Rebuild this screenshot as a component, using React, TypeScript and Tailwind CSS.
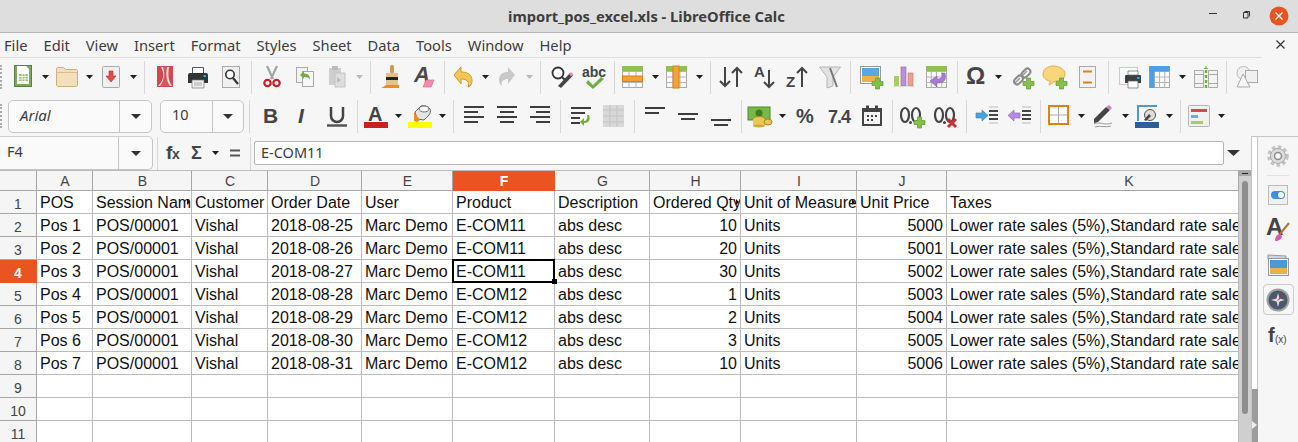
import type { ReactNode } from "react";

const ui = "font-['Noto_Sans','Open_Sans',sans-serif]";
const sans = "Liberation Sans, Arial, sans-serif";

function Ico({ c, w, children }: { c: string; w: number; children: ReactNode }) {
  return (
    <svg className={`shrink-0 h-[24px] overflow-visible ${c}`} width={w} height={24} viewBox={`0 0 ${w} 24`} fill="none">
      {children}
    </svg>
  );
}

function Dd({ c, off }: { c: string; off?: boolean }) {
  return (
    <svg className={`shrink-0 ${c}`} width={7} height={4} viewBox="0 0 7 4">
      <path d="M0 0h7L3.5 4z" fill={off ? "#b9b9b9" : "#1f1f1f"} />
    </svg>
  );
}

function Sep({ c }: { c: string }) {
  return <div className={`shrink-0 w-px h-[33px] bg-[#d8d8d8] ${c}`} />;
}

function Plus({ x, y }: { x: number; y: number }) {
  return (
    <path
      transform={`translate(${x} ${y})`}
      d="M3.5 0h4v3.5H11v4H7.5V11h-4V7.5H0v-4h3.5z"
      fill="#86bf4b"
      stroke="#5f9a32"
      strokeWidth=".7"
    />
  );
}

function Tbl({ x, y, w, h, cols, rows }: { x: number; y: number; w: number; h: number; cols: number; rows: number }) {
  const lines = [];
  for (let i = 1; i < cols; i++) lines.push(`M${x + (w * i) / cols} ${y}v${h}`);
  for (let i = 1; i < rows; i++) lines.push(`M${x} ${y + (h * i) / rows}h${w}`);
  return (
    <g>
      <rect x={x + 0.5} y={y + 0.5} width={w - 1} height={h - 1} fill="#fafafa" stroke="#a9a9a9" />
      <path d={lines.join("")} stroke="#b5b5b5" />
    </g>
  );
}

function Letter({ x, y, s, size, fill = "#444", italic, weight = 700, spacing }: { x: number; y: number; s: string; size: number; fill?: string; italic?: boolean; weight?: number; spacing?: number }) {
  return (
    <text x={x} y={y} fontFamily={sans} fontSize={size} fontWeight={weight} fontStyle={italic ? "italic" : "normal"} fill={fill} letterSpacing={spacing}>
      {s}
    </text>
  );
}

function ToolbarOne() {
  return (
    <div className="flex items-center h-[38px]">
      <div className="w-[2px] h-[24px] border-l-2 border-dotted border-[#aaa] shrink-0" />
      <Ico c="ml-[12px]" w={18}>
        <rect x=".5" y=".5" width="17" height="21" fill="#7ca860" stroke="#567f41" />
        <path d="M3 1h9l3 3v15H3z" fill="#fff" />
        <path d="M5 9h9v7H5z" fill="#9cc27f" />
        <path d="M5 11.5h9M5 14h9M8 9v7M11 9v7" stroke="#fff" strokeWidth=".8" />
      </Ico>
      <Dd c="ml-[10px]" />
      <Ico c="ml-[7px]" w={22}>
        <path d="M.5 5.500V3.500l1-1h6l2 2h11l1 1v15l-1 1h-19l-1-1z" fill="#f2dfbb" stroke="#cfae7c" />
        <path d="M1 7.500h20" stroke="#d9bd8d" />
      </Ico>
      <Dd c="ml-[8px]" />
      <Ico c="ml-[9px]" w={18}>
        <rect x=".5" y="1.500" width="17" height="21" rx="1" fill="#efefef" stroke="#a9a9a9" />
        <path d="M7 6h4v5h3l-5 6-5-6h3z" fill="#e24b4b" stroke="#b52c2c" strokeWidth=".6" />
      </Ico>
      <Dd c="ml-[10px]" />
      <Sep c="ml-[7px]" />
      <Ico c="ml-[12px]" w={16}>
        <rect y="1" width="16" height="21" fill="#cf4a50" />
        <path d="M1 21C8 14 7 8 4 2h8c-1 7-1 13 3 19z" fill="#f3d7d5" />
        <path d="M3 21C8 14 8 8 6 2h4c-1 7-1 13 3 19z" fill="#cf5b60" />
      </Ico>
      <Ico c="ml-[15px]" w={20}>
        <path d="M4.500 2.500h11v6h-11z" fill="#fff" stroke="#555" />
        <path d="M0 10a2 2 0 0 1 2-2h16a2 2 0 0 1 2 2v8H0z" fill="#2f3437" />
        <rect x="15.500" y="10" width="2.500" height="2" fill="#29a8df" />
        <path d="M4 15h12v8H4z" fill="#efefef" stroke="#777" strokeWidth=".7" />
        <path d="M6 18h8M6 20h8" stroke="#aaa" />
      </Ico>
      <Ico c="ml-[14px]" w={18}>
        <rect x=".5" y="1.500" width="17" height="21" fill="#f0f0f0" stroke="#a9a9a9" />
        <circle cx="8" cy="9.500" r="4.200" fill="#fff" stroke="#333" strokeWidth="1.600" />
        <path d="M11 13l5 6" stroke="#333" strokeWidth="2.200" />
      </Ico>
      <Sep c="ml-[11px]" />
      <Ico c="ml-[11px]" w={18}>
        <path d="M4 1l6 13M14 1L8 14" stroke="#a4a4a4" strokeWidth="2.200" />
        <circle cx="4.500" cy="18" r="3.200" stroke="#c3222a" strokeWidth="2.200" />
        <circle cx="13.500" cy="18" r="3.200" stroke="#c3222a" strokeWidth="2.200" />
      </Ico>
      <Ico c="ml-[15px]" w={18}>
        <rect x=".5" y="2.500" width="11" height="15" fill="#f2f2f2" stroke="#a9a9a9" />
        <rect x="6.500" y="6.500" width="11" height="15" fill="#f8f8f8" stroke="#a9a9a9" />
        <path d="M4 10l4-4v2.500c4 0 6 2 6 6-1.500-2-3-2.500-6-2.500V14z" fill="#6fb041" />
      </Ico>
      <Ico c="ml-[14px]" w={18}>
        <rect x="1" y="3" width="12" height="17" fill="#cfcfcf" />
        <rect x="4" y="1" width="6" height="4" fill="#bbb" />
        <rect x="7" y="8" width="10" height="14" fill="#dedede" stroke="#c4c4c4" />
        <path d="M9 12l4 3-4 3z" fill="#bdbdbd" />
      </Ico>
      <Dd c="ml-[10px]" off />
      <Sep c="ml-[7px]" />
      <Ico c="ml-[10px]" w={20}>
        <rect x="9" y="0" width="4" height="8" rx="1.500" fill="#d19a52" />
        <path d="M5 8h12v4H5z" fill="#e3c07f" />
        <path d="M5 12h12v3H5z" fill="#222" />
        <path d="M5 15h12v5H5z" fill="#e6c489" />
        <path d="M0 23c3-1 4-3 6-3h12v3z" fill="#ee8a1f" />
      </Ico>
      <Ico c="ml-[13px]" w={20}>
        <Letter x={0} y={17} s="A" size={22} italic fill="#4a4a4a" />
        <path d="M9 22l3-7h8l-3 7z" fill="#f18cb0" stroke="#d0688e" strokeWidth=".6" />
      </Ico>
      <Sep c="ml-[10px]" />
      <Ico c="ml-[8px]" w={20}>
        <path d="M8 2v5c6 0 11 2 11 9 0 3-2 6-4 6 1-2 2-8-7-8v5L1 10z" fill="#f3c658" stroke="#c99c2f" />
      </Ico>
      <Dd c="ml-[9px]" />
      <Ico c="ml-[9px]" w={18}>
        <path d="M10 2v5C5 7 1 9 1 15c0 3 1 5 3 6-1-3 0-7 6-7v5l7-9z" fill="#c9c9c9" />
      </Ico>
      <Dd c="ml-[10px]" off />
      <Sep c="ml-[7px]" />
      <Ico c="ml-[10px]" w={22}>
        <circle cx="7" cy="8" r="5.500" stroke="#333" strokeWidth="1.800" fill="#fff" />
        <path d="M11 12l3 3" stroke="#333" strokeWidth="2" />
        <path d="M7 21L19 8l3 2.500L10 23z" fill="#444" />
        <path d="M18 9l2-2 2.500 2.500L20 11.500z" fill="#e58ac0" />
      </Ico>
      <Ico c="ml-[9px]" w={24}>
        <Letter x={0} y={12} s="abc" size={14} />
        <path d="M6 15l5 5 8-8 3 2-11 10-7-6z" fill="#6fb041" />
      </Ico>
      <Sep c="ml-[8px]" />
      <Ico c="ml-[7px]" w={21}>
        <Tbl x={0} y={1} w={21} h={22} cols={3} rows={4} />
        <rect x=".5" y="1" width="20" height="5" fill="#8dc24f" />
        <rect x=".5" y="11" width="20" height="5.500" fill="#f0a33c" stroke="#e07f10" />
      </Ico>
      <Dd c="ml-[9px]" />
      <Ico c="ml-[7px]" w={21}>
        <Tbl x={0} y={1} w={21} h={22} cols={3} rows={4} />
        <rect x=".5" y="1" width="20" height="5" fill="#8dc24f" />
        <rect x="7" y="1" width="6" height="22" fill="#f0a33c" stroke="#e07f10" />
      </Ico>
      <Dd c="ml-[9px]" />
      <Sep c="ml-[7px]" />
      <Ico c="ml-[8px]" w={24}>
        <path d="M6 2v19M1 16l5 5 5-5M18 22V3M13 8l5-5 5 5" stroke="#444" strokeWidth="2" />
      </Ico>
      <Ico c="ml-[11px]" w={22}>
        <Letter x={0} y={12} s="A" size={15} />
        <path d="M15 5v17M10 17l5 5 5-5" stroke="#444" strokeWidth="2" />
      </Ico>
      <Ico c="ml-[10px]" w={25}>
        <Letter x={0} y={22} s="Z" size={15} />
        <path d="M16 22V3M11 8l5-5 5 5" stroke="#444" strokeWidth="2" />
      </Ico>
      <Ico c="ml-[8px]" w={22}>
        <path d="M.5 2h21L14 12v9l-6 2V12z" fill="#e2e2e2" stroke="#b5b5b5" />
        <path d="M11 3l7 19" stroke="#777" strokeWidth="2" />
      </Ico>
      <Sep c="ml-[9px]" />
      <Ico c="ml-[9px]" w={23}>
        <rect x=".5" y="1.500" width="20" height="17" fill="#fff" stroke="#999" />
        <rect x="2" y="3" width="17" height="8" fill="#5aa6e0" />
        <rect x="2" y="11" width="17" height="6" fill="#f0b04a" />
        <Plus x={12} y={13} />
      </Ico>
      <Ico c="ml-[10px]" w={22}>
        <rect x="1" y="11" width="5" height="10" fill="#a6cf62" />
        <rect x="8" y="2" width="5" height="19" fill="#b98fd6" stroke="#8f67ad" strokeWidth=".6" />
        <rect x="15" y="8" width="5" height="13" fill="#eda08f" stroke="#c57764" strokeWidth=".6" />
        <path d="M0 21.500h22" stroke="#ddd" />
      </Ico>
      <Ico c="ml-[11px]" w={21}>
        <Tbl x={0} y={1} w={21} h={22} cols={4} rows={4} />
        <rect x=".5" y="1" width="20" height="5" fill="#8dc24f" />
        <path d="M19 8c2 8-2 10-8 10v4l-7-6 7-5v3c4 0 6-2 5-6z" fill="#a77bd1" stroke="#7e57a5" strokeWidth=".5" />
      </Ico>
      <Sep c="ml-[10px]" />
      <Ico c="ml-[8px]" w={20}>
        <Letter x={0} y={19} s="Ω" size={24} />
      </Ico>
      <Dd c="ml-[9px]" />
      <Ico c="ml-[10px]" w={22}>
        <path d="M3 18l5-5M10 11l5-5" stroke="#999" strokeWidth="1.500" />
        <rect x="1.500" y="12" width="10" height="6" rx="3" transform="rotate(-45 6.500 15)" stroke="#8a8a8a" strokeWidth="2" />
        <rect x="9" y="5" width="10" height="6" rx="3" transform="rotate(-45 14 8)" stroke="#8a8a8a" strokeWidth="2" />
        <Plus x={11} y={13} />
      </Ico>
      <Ico c="ml-[9px]" w={24}>
        <path d="M10 1c6 0 12 3 12 8s-5 7-10 7c-2 2-4 3-6 4 1-2 1-3 1-4C2 15 0 12 0 9c0-5 5-8 10-8z" fill="#f9d67a" stroke="#e0b048" />
        <Plus x={13} y={13} />
      </Ico>
      <Ico c="ml-[12px]" w={17}>
        <rect x=".5" y="1.500" width="16" height="21" fill="#f2f2f2" stroke="#a9a9a9" />
        <path d="M4 6.500h9M4 17.500h9" stroke="#e07f10" strokeWidth="2" />
      </Ico>
      <Sep c="ml-[12px]" />
      <Ico c="ml-[10px]" w={22}>
        <rect x=".5" y="2.500" width="18" height="17" fill="#fafafa" stroke="#c98a8a" strokeDasharray="1 1" />
        <path d="M6 11a1 1 0 0 1 1-1h14a1 1 0 0 1 1 1v7H6z" fill="#3a3f42" />
        <path d="M9 6h10v4H9zM9 16h10v7H9z" fill="#fff" stroke="#666" strokeWidth=".7" />
        <rect x="18" y="12" width="2.500" height="2" fill="#29a8df" />
      </Ico>
      <Ico c="ml-[8px]" w={21}>
        <Tbl x={0} y={1} w={21} h={22} cols={4} rows={4} />
        <rect x=".5" y="1" width="20" height="5.500" fill="#4f9fe0" />
        <rect x=".5" y="1" width="5" height="22" fill="#4f9fe0" />
      </Ico>
      <Dd c="ml-[9px]" />
      <Ico c="ml-[8px]" w={24}>
        <path d="M.5 5.500h9v17h-9zM14.500 5.500h9v17h-9z" fill="#f3f3f3" stroke="#aaa" />
        <path d="M.5 9.500h9M14.500 9.500h9M.5 18.500h9M14.500 18.500h9" stroke="#aaa" />
        <path d="M12 5v19" stroke="#6fb041" strokeWidth="2.500" strokeDasharray="3 2" />
        <path d="M10 3h1.500V1h1v2H14v1h-4z" fill="#6fb041" />
      </Ico>
      <Sep c="ml-[8px]" />
      <Ico c="ml-[9px]" w={22}>
        <circle cx="7.500" cy="8" r="6.500" fill="#f0f0f0" stroke="#bbb" />
        <rect x="9.500" y="5.500" width="12" height="12" fill="#f0f0f0" stroke="#aaa" />
        <path d="M7 9l7 13H1z" fill="#f6f6f6" stroke="#aaa" />
      </Ico>
    </div>
  );
}

function Combo({ text, italic, c, split }: { text: string; italic?: boolean; c: string; split: string }) {
  return (
    <div className={`shrink-0 flex h-[33px] bg-[#fafafa] border border-[#c5c5c5] rounded-[5px] ${c}`}>
      <div className={`flex items-center pl-[11px] pb-[2px] border-r border-[#c5c5c5] text-[#3d3d3d] ${italic ? "italic text-[15px]" : "text-[14.5px]"} ${split}`}>{text}</div>
      <div className="flex-1 flex items-center justify-center">
        <svg width={10} height={5} viewBox="0 0 10 5">
          <path d="M0 0h10L5 5z" fill="#333" />
        </svg>
      </div>
    </div>
  );
}

function ToolbarTwo() {
  return (
    <div className="flex items-center h-[40px]">
      <div className="w-[2px] h-[24px] border-l-2 border-dotted border-[#aaa] shrink-0" />
      <Combo text="Arial" italic c="ml-[6px] w-[144px]" split="w-[111px]" />
      <Combo text="10" c="ml-[8px] w-[84px]" split="w-[52px]" />
      <Sep c="ml-[5px]" />
      <Ico c="ml-[14px]" w={13}>
        <Letter x={-1} y={19} s="B" size={21} />
      </Ico>
      <Ico c="ml-[21px]" w={11}>
        <Letter x={0} y={19} s="I" size={21} italic />
      </Ico>
      <Ico c="ml-[18px]" w={20}>
        <path d="M4 3v9a6 6 0 0 0 12 0V3" stroke="#444" strokeWidth="2.500" />
        <path d="M0 21.500h20" stroke="#555" strokeWidth="2.500" />
      </Ico>
      <Sep c="ml-[10px]" />
      <Ico c="ml-[6px]" w={24}>
        <Letter x={4} y={17} s="A" size={20} />
        <rect y="18" width="24" height="6" fill="#c9211e" />
      </Ico>
      <Dd c="ml-[7px]" />
      <Ico c="ml-[6px]" w={24}>
        <path d="M7 8l6-6c3-1 7 0 9 3 1 2 0 5-1 6l-5 5-7-1z" fill="#e4e4e4" stroke="#666" />
        <ellipse cx="16" cy="5" rx="5" ry="3" fill="#f6f6f6" stroke="#777" />
        <path d="M6 8l6 8-3 2-3-1z" fill="#ee8a1f" />
        <rect y="18" width="24" height="6" fill="#ffff00" />
      </Ico>
      <Dd c="ml-[7px]" />
      <Sep c="ml-[7px]" />
      <Ico c="ml-[10px]" w={20}>
        <path d="M0 3h20M0 8h14M0 13h20M0 18h14" stroke="#3d3d3d" strokeWidth="2" />
      </Ico>
      <Ico c="ml-[13px]" w={20}>
        <path d="M0 3h20M3 8h14M0 13h20M3 18h14" stroke="#3d3d3d" strokeWidth="2" />
      </Ico>
      <Ico c="ml-[13px]" w={20}>
        <path d="M0 3h20M6 8h14M0 13h20M6 18h14" stroke="#3d3d3d" strokeWidth="2" />
      </Ico>
      <Sep c="ml-[10px]" />
      <Ico c="ml-[10px]" w={20}>
        <path d="M0 4h20M0 9h14M0 14h9M0 19h9" stroke="#3d3d3d" strokeWidth="2" />
        <path d="M18 11c2 6-1 8-5 8v3l-4-4 4-4v3c2 0 4-2 3-6z" fill="#6fb041" />
      </Ico>
      <Ico c="ml-[12px]" w={21}>
        <rect width="21" height="22" y="1" fill="#d8d8d8" />
        <path d="M0 6h21M0 12h21M0 18h21M7 1v22M14 1v22" stroke="#c3c3c3" />
      </Ico>
      <Sep c="ml-[10px]" />
      <Ico c="ml-[10px]" w={20}>
        <path d="M0 4h20M0 9h14" stroke="#3d3d3d" strokeWidth="2" />
      </Ico>
      <Ico c="ml-[13px]" w={20}>
        <path d="M0 10h20M3 15h14" stroke="#3d3d3d" strokeWidth="2" />
      </Ico>
      <Ico c="ml-[13px]" w={20}>
        <path d="M0 16h20M3 21h14" stroke="#3d3d3d" strokeWidth="2" />
      </Ico>
      <Sep c="ml-[10px]" />
      <Ico c="ml-[6px]" w={24}>
        <rect x="0" y="3" width="22" height="13" fill="#77b84a" stroke="#4f8a2c" />
        <circle cx="11" cy="9" r="3.500" fill="#3f7c20" />
        <ellipse cx="11" cy="15" rx="6" ry="2.500" fill="#e8c65a" stroke="#a98520" />
        <rect x="5" y="15" width="12" height="7" fill="#e8c65a" />
        <ellipse cx="11" cy="22" rx="6" ry="1.500" fill="#cda93e" />
        <ellipse cx="20" cy="18" rx="4" ry="3" fill="#e8c65a" stroke="#a98520" />
      </Ico>
      <Dd c="ml-[7px]" />
      <Ico c="ml-[11px]" w={18}>
        <Letter x={-1} y={19} s="%" size={20} />
      </Ico>
      <Ico c="ml-[13px]" w={22}>
        <Letter x={0} y={19} s="7.4" size={18} spacing={-1} />
      </Ico>
      <Ico c="ml-[12px]" w={20}>
        <path d="M0 4h20v18H0z" fill="#444" />
        <rect x="4" y="1.500" width="3" height="4" fill="#444" />
        <rect x="13" y="1.500" width="3" height="4" fill="#444" />
        <rect x="2" y="8" width="16" height="12" fill="#f6f6f6" />
        <path d="M5 12h2M9 12h2M13 12h2M5 16h2M9 16h2" stroke="#444" strokeWidth="2" />
      </Ico>
      <Sep c="ml-[10px]" />
      <Ico c="ml-[7px]" w={25}>
        <ellipse cx="5" cy="11" rx="4" ry="7" stroke="#444" strokeWidth="2.200" />
        <ellipse cx="16" cy="11" rx="4" ry="7" stroke="#444" strokeWidth="2.200" />
        <circle cx="10.500" cy="18.500" r="1.500" fill="#444" />
        <Plus x={14} y={13} />
      </Ico>
      <Ico c="ml-[9px]" w={24}>
        <ellipse cx="5" cy="11" rx="4" ry="7" stroke="#444" strokeWidth="2.200" />
        <ellipse cx="16" cy="11" rx="4" ry="7" stroke="#444" strokeWidth="2.200" />
        <circle cx="10.500" cy="18.500" r="1.500" fill="#444" />
        <path d="M14 15l8 8M22 15l-8 8" stroke="#c9303a" strokeWidth="3" />
      </Ico>
      <Sep c="ml-[8px]" />
      <Ico c="ml-[9px]" w={23}>
        <path d="M0 9h6V6l6 5.500L6 17v-3H0z" fill="#4aa3df" stroke="#2b80b8" strokeWidth=".6" />
        <path d="M13 7h9M13 11h9M13 15h9" stroke="#444" strokeWidth="1.800" />
        <path d="M13 3h9M13 19h9" stroke="#bbb" />
      </Ico>
      <Ico c="ml-[9px]" w={23}>
        <path d="M12 9H6V6L0 11.500 6 17v-3h6z" fill="#b68ae0" stroke="#8d61b8" strokeWidth=".6" />
        <path d="M14 7h9M14 11h9M14 15h9" stroke="#444" strokeWidth="1.800" />
        <path d="M14 3h9M14 19h9" stroke="#bbb" />
      </Ico>
      <Sep c="ml-[9px]" />
      <Ico c="ml-[7px]" w={21}>
        <rect x="1" y="2" width="19" height="18" fill="#fff" stroke="#e67e10" strokeWidth="2" />
        <path d="M10.500 3v16M2 11h17" stroke="#aaa" />
      </Ico>
      <Dd c="ml-[9px]" />
      <Ico c="ml-[8px]" w={20}>
        <path d="M1 15L13 3l4 3L5 18l-4 1z" fill="#444" />
        <path d="M13 3l3-2 3 3-2 2z" fill="#d87cc4" />
        <path d="M1 20c6-3 10 2 18-1M2 23c6-2 10 1 16-1" stroke="#999" />
      </Ico>
      <Dd c="ml-[9px]" />
      <Ico c="ml-[6px]" w={24}>
        <path d="M2 1h20v2H4v14H2z" fill="#4a9ad8" />
        <circle cx="15" cy="11" r="5.500" fill="#ddd" stroke="#555" />
        <path d="M9 16l5-6 2 2-5 5z" fill="#444" />
        <rect y="18" width="24" height="6" fill="#2a6099" />
      </Ico>
      <Dd c="ml-[7px]" />
      <Sep c="ml-[7px]" />
      <Ico c="ml-[7px]" w={22}>
        <rect x=".5" y="1.500" width="21" height="21" rx="1" fill="#f0f0f0" stroke="#b5b5b5" />
        <rect x="3" y="5" width="16" height="3" fill="#d0494c" />
        <rect x="3" y="11" width="7" height="3" fill="#65ade5" />
        <rect x="3" y="17" width="12" height="3" fill="#a6cf62" />
      </Ico>
      <Dd c="ml-[8px]" />
    </div>
  );
}

function FormulaBar() {
  return (
    <div className="flex items-center h-[34px] bg-[#f6f6f6]">
      <div className="shrink-0 flex self-start w-[153px] h-[34px] border border-t-[#cfcfcf] border-[#c5c5c5] border-l-0 rounded-br-[5px] rounded-tr-[5px] bg-[#fafafa]">
        <div className="flex items-center pl-[7px] pb-[2px] w-[119px] border-r border-[#c5c5c5] text-[14.5px] text-[#3d3d3d]">F4</div>
        <div className="flex-1 flex items-center justify-center">
          <svg width={10} height={5} viewBox="0 0 10 5">
            <path d="M0 0h10L5 5z" fill="#333" />
          </svg>
        </div>
      </div>
      <Sep c="ml-[4px] h-[24px]" />
      <Ico c="ml-[8px]" w={17}>
        <Letter x={0} y={18} s="f" size={19} />
        <Letter x={6} y={18} s="x" size={14} />
      </Ico>
      <Ico c="ml-[8px]" w={13}>
        <Letter x={0} y={18} s="Σ" size={18} />
      </Ico>
      <Dd c="ml-[8px]" />
      <Ico c="ml-[11px]" w={10}>
        <path d="M0 9.500h10M0 14.500h10" stroke="#555" strokeWidth="2" />
      </Ico>
      <Sep c="ml-[10px] h-[24px]" />
      <div className="ml-[3px] flex items-center pl-[6px] pb-px w-[970px] h-[24px] bg-white border border-[#b5b5b5] rounded-[2px] text-[14.5px] text-[#3d3d3d]">E-COM11</div>
      <svg className="ml-[3px]" width={13} height={6} viewBox="0 0 13 6">
        <path d="M0 0h13L6.500 6z" fill="#333" />
      </svg>
    </div>
  );
}

const columns = ["A", "B", "C", "D", "E", "F", "G", "H", "I", "J", "K"];
const heads = ["POS", "Session Name", "Customer", "Order Date", "User", "Product", "Description", "Ordered Qty", "Unit of Measure", "Unit Price", "Taxes"];
const taxes = "Lower rate sales (5%),Standard rate sales (15%)";
const rows = [
  ["Pos 1", "2018-08-25", "E-COM11", "10", "5000"],
  ["Pos 2", "2018-08-26", "E-COM11", "20", "5001"],
  ["Pos 3", "2018-08-27", "E-COM11", "30", "5002"],
  ["Pos 4", "2018-08-28", "E-COM12", "1", "5003"],
  ["Pos 5", "2018-08-29", "E-COM12", "2", "5004"],
  ["Pos 6", "2018-08-30", "E-COM12", "3", "5005"],
  ["Pos 7", "2018-08-31", "E-COM12", "10", "5006"],
];

const cellCls = "relative h-[23px] border-r border-b border-[#bcbcbc] px-[3px] overflow-hidden whitespace-nowrap text-[16px] leading-[24px] text-[#111] bg-white";
const headCls = "flex items-center justify-center border-r border-b border-[#a6a6a6] text-[14px] leading-none text-[#444] bg-[#f5f5f5]";
const activeHead = "flex items-center justify-center border-r border-b border-[#e95420] bg-[#e95420] text-white font-bold text-[14px] leading-none";

function Clip() {
  return (
    <svg className="absolute right-px top-[8px]" width={3} height={6} viewBox="0 0 3 6">
      <path d="M0 0l3 3-3 3z" fill="#300" />
    </svg>
  );
}

function Cell({ text, right, clip, active }: { text?: string; right?: boolean; clip?: boolean; active?: boolean }) {
  return (
    <div className={`${cellCls} ${right ? "text-right" : ""} ${active ? "overflow-visible" : ""}`}>
      {text}
      {clip && <Clip />}
      {active && (
        <>
          <div className="absolute left-[-1px] top-[-1px] w-[103px] h-[24px] border-2 border-black" />
          <div className="absolute right-[-3px] bottom-[-2px] z-10 w-[5px] h-[5px] bg-black" />
        </>
      )}
    </div>
  );
}

function Sheet() {
  return (
    <div className="w-[1239px] border-t border-[#bcbcbc] font-['Liberation_Sans',Arial,sans-serif]">
      <div className="grid grid-cols-[37px_56px_99px_76px_94px_91px_102px_95px_91px_116px_90px_292px]">
        <div className="h-[20px] bg-[#f5f5f5] border-r border-b border-[#a6a6a6]" />
        {columns.map((c) => (
          <div key={c} className={`${c === "F" ? activeHead : headCls} ${c === "K" ? "pl-[73px]" : "pl-px"}`}>
            {c}
          </div>
        ))}
        <div className={`${headCls} pt-[3px]`}>1</div>
        {heads.map((h) => (
          <Cell key={h} text={h} clip={h === "Session Name" || h === "Ordered Qty" || h === "Unit of Measure"} />
        ))}
        {rows.map((r, i) => (
          <div key={r[0]} className="contents">
            <div className={`${i === 2 ? activeHead : headCls} pt-[3px]`}>{i + 2}</div>
            <Cell text={r[0]} />
            <Cell text="POS/00001" />
            <Cell text="Vishal" />
            <Cell text={r[1]} />
            <Cell text="Marc Demo" />
            <Cell text={r[2]} active={i === 2} />
            <Cell text="abs desc" />
            <Cell text={r[3]} right />
            <Cell text="Units" />
            <Cell text={r[4]} right />
            <Cell text={taxes} />
          </div>
        ))}
        {[9, 10, 11].map((n) => (
          <div key={n} className="contents">
            <div className={`${headCls} pt-[3px]`}>{n}</div>
            {columns.map((c) => (
              <Cell key={c} />
            ))}
          </div>
        ))}
      </div>
    </div>
  );
}

function Scrollbar() {
  return (
    <div className="shrink-0 w-[12px] flex flex-col bg-[#cfcfcf]">
      <div className="h-[6px] bg-[#a8a8a8] flex items-center justify-center">
        <div className="w-[6px] h-[1px] bg-[#222]" />
      </div>
      <div className="mt-[5px] ml-[3px] w-[6px] h-[233px] bg-[#8e8e8e] rounded-[3px]" />
    </div>
  );
}

function Sidebar() {
  return (
    <div className="shrink-0 w-[47px] flex border-t border-[#c5c5c5] bg-[#f6f6f6]">
      <div className="shrink-0 w-[7px] flex flex-col border-l border-[#c5c5c5]">
        <div className="h-[252px] bg-white border-r border-[#c5c5c5]" />
        <div className="relative flex-1 bg-[#9c9c9c]">
          <svg className="absolute top-[32px] left-0" width={5} height={8} viewBox="0 0 5 8">
            <path d="M0 0l5 4-5 4z" fill="#eee" />
          </svg>
        </div>
      </div>
      <div className="flex-1 flex flex-col items-center">
        <svg className="mt-[8px]" width={22} height={22} viewBox="0 0 22 22" fill="none">
          <circle cx="11" cy="11" r="9" stroke="#c4c4c4" strokeWidth="3.500" strokeDasharray="3.500 2.500" />
          <circle cx="11" cy="11" r="7.500" fill="#dcdcdc" stroke="#aaa" />
          <circle cx="11" cy="11" r="3.500" fill="#f6f6f6" stroke="#8e8e8e" strokeWidth="1.500" />
        </svg>
        <div className="mt-[8px] w-[22px] h-px bg-[#e2e2e2]" />
        <svg className="mt-[9px]" width={20} height={20} viewBox="0 0 20 20" fill="none">
          <rect x=".5" y=".5" width="19" height="19" fill="#f0f0f0" stroke="#bbb" />
          <rect x="3" y="6" width="14" height="8" rx="4" fill="#3d8fe0" />
          <circle cx="13" cy="10" r="3" fill="#fff" />
        </svg>
        <svg className="mt-[11px] overflow-visible" width={24} height={26} viewBox="0 0 24 26" fill="none">
          <text x="0" y="19" fontFamily={sans} fontSize="24" fontWeight="700" fill="#444">A</text>
          <path d="M23 7L14 18" stroke="#b8742c" strokeWidth="2" />
          <path d="M9 25c0-4 2-7 5-7l2 2c0 3-3 5-7 5z" fill="#d85fb0" />
        </svg>
        <svg className="mt-[12px]" width={23} height={22} viewBox="0 0 23 22" fill="none">
          <path d="M1 1l18 1v3H1z" fill="#c9d8e6" stroke="#999" />
          <rect x="1.500" y="4.500" width="20" height="17" fill="#fff" stroke="#999" />
          <rect x="3" y="6" width="17" height="8" fill="#4a9ad8" />
          <rect x="3" y="14" width="17" height="6" fill="#efb04c" />
        </svg>
        <div className="mt-[8px] w-[31px] h-[31px] flex items-center justify-center border border-[#ccc] rounded-[4px]">
          <svg width={24} height={24} viewBox="0 0 24 24" fill="none">
            <circle cx="12" cy="12" r="10.500" fill="#4d566b" stroke="#a0a0a0" strokeWidth="2" />
            <path d="M12 5l1.500 5.500L19 12l-5.500 1.500L12 19l-1.500-5.500L5 12l5.500-1.500z" fill="#dfdfe6" />
            <path d="M17 5l-3.500 6.500L11 13z" fill="#d22" />
          </svg>
        </div>
        <svg className="mt-[10px] overflow-visible" width={22} height={22} viewBox="0 0 22 22" fill="none">
          <text x="1" y="17" fontFamily={sans} fontSize="20" fontWeight="700" fill="#444">f</text>
          <text x="8" y="18" fontFamily={sans} fontSize="10" fontWeight="400" fill="#444">(x)</text>
        </svg>
      </div>
    </div>
  );
}

const menus = ["File", "Edit", "View", "Insert", "Format", "Styles", "Sheet", "Data", "Tools", "Window", "Help"];

export default function App() {
  return (
    <div className={`w-[1298px] h-[442px] overflow-hidden flex flex-col bg-[#f6f6f6] ${ui}`}>
      <div className="flex items-center h-[33px] shrink-0 bg-[#dedede] border-b border-[#b5b5b5]">
        <div className="ml-[508px] text-[14.7px] font-bold text-[#3d3d3d]">import_pos_excel.xls - LibreOffice Calc</div>
        <svg className="ml-auto mr-[9px]" width={80} height={20} viewBox="0 0 80 20" fill="none">
          <path d="M0 7.500h8" stroke="#333" strokeWidth="1" />
          <path d="M35.500 5.500h5v5M34.500 6.500h4.500v5.500h-4.500z" stroke="#333" />
          <circle cx="70" cy="10" r="9.500" fill="#e95420" />
          <path d="M66.500 6.500l7 7M73.500 6.500l-7 7" stroke="#fff" strokeWidth="1.300" />
        </svg>
      </div>
      <div className="relative shrink-0 flex items-center gap-[16px] pl-[4px] h-[25px] border-b border-[#dedede] w-[1262px] text-[14.7px] text-[#3d3d3d]">
        {menus.map((label) => (
          <span key={label}>{label}</span>
        ))}
        <svg className="absolute left-[1276px] top-[7px]" width={9} height={9} viewBox="0 0 9 9" fill="none">
          <path d="M.5.500l8 8M8.500.500l-8 8" stroke="#333" strokeWidth="1.200" />
        </svg>
      </div>
      <ToolbarOne />
      <ToolbarTwo />
      <div className="flex flex-1 min-h-0">
        <div className="flex flex-col w-[1251px] shrink-0">
          <FormulaBar />
          <div className="flex flex-1 min-h-0">
            <Sheet />
            <Scrollbar />
          </div>
        </div>
        <Sidebar />
      </div>
    </div>
  );
}
